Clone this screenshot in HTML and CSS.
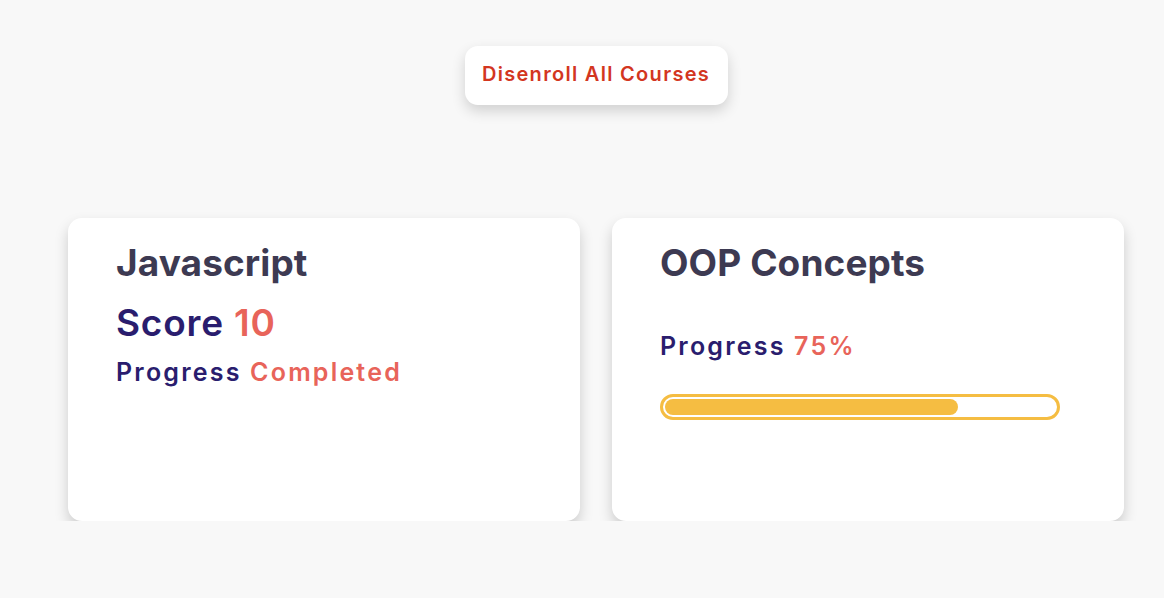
FILE: index.html
```html
<!DOCTYPE html>
<html>
<head>
<meta charset="utf-8">
<link rel="stylesheet" href="styles.css">
</head>
<body>
<main class="page">
  <div class="actions">
    <button class="btn-disenroll">Disenroll All Courses</button>
  </div>
  <section class="courses">
    <article class="card">
      <h2 class="card-title">Javascript</h2>
      <p class="score">Score <span class="accent">10</span></p>
      <p class="progress">Progress <span class="accent">Completed</span></p>
    </article>
    <article class="card">
      <h2 class="card-title">OOP Concepts</h2>
      <p class="progress progress-gap">Progress <span class="accent">75%</span></p>
      <div class="bar"><div class="bar-fill" style="width:75%"></div></div>
    </article>
  </section>
</main>
</body>
</html>
```
FILE: styles.css
```css
html, body {
  margin: 0;
  padding: 0;
  background: #f8f8f8;
  font-family: "Inter", "Noto Sans", sans-serif;
}
.page {
  padding: 46px 40px 0 68px;
}
.actions {
  display: flex;
  justify-content: center;
}
.btn-disenroll {
  width: 263px;
  height: 59px;
  padding: 0 0 3px;
  border: none;
  border-radius: 13px;
  background: #fff;
  color: #d3361f;
  font-family: inherit;
  font-size: 20px;
  font-weight: 600;
  letter-spacing: 1.3px;
  box-shadow: 0 6px 14px rgba(0,0,0,0.16);
  cursor: pointer;
}
.courses {
  display: grid;
  grid-template-columns: 512px 512px;
  gap: 32px;
  margin-top: 113px;
}
.card {
  background: #fff;
  border-radius: 14px;
  height: 303px;
  box-sizing: border-box;
  padding: 21px 40px 0 48px;
  box-shadow: 0 7px 14px rgba(0,0,0,0.18);
}
.card-title {
  margin: 0;
  font-size: 37px;
  line-height: 48px;
  font-weight: 700;
  letter-spacing: 0.1px;
  color: #3d3a52;
}
.score {
  margin: 14px 0 0;
  font-size: 37px;
  line-height: 44px;
  font-weight: 600;
  color: #2a1d6e;
  letter-spacing: 0.8px;
}
.progress {
  margin: 12px 0 0;
  font-size: 25px;
  line-height: 30px;
  font-weight: 600;
  color: #2a1d6e;
  letter-spacing: 2.2px;
}
.progress-gap {
  margin-top: 44px;
}
.accent {
  color: #e8645a;
}
.bar {
  margin-top: 33px;
  width: 400px;
  height: 26px;
  box-sizing: border-box;
  border: 3px solid #f5bd42;
  border-radius: 13px;
  padding: 2px;
}
.bar-fill {
  height: 100%;
  background: #f5bd42;
  border-radius: 8px;
}
```
